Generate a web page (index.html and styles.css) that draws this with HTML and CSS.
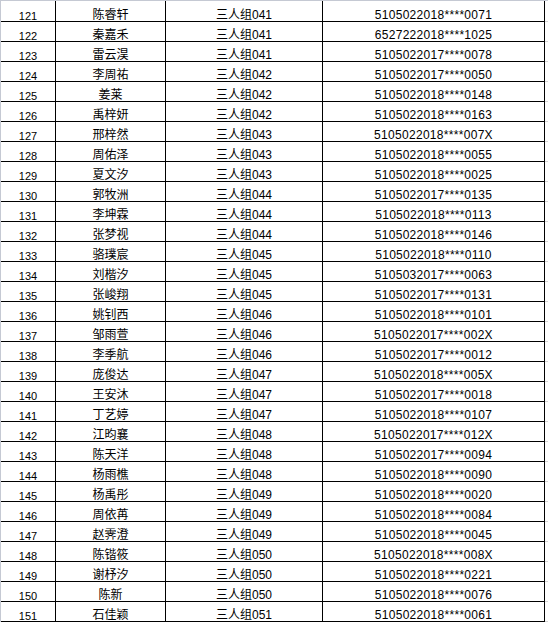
FILE: index.html
```html
<!DOCTYPE html>
<html lang="zh-CN">
<head>
<meta charset="utf-8">
<link rel="stylesheet" href="styles.css">
</head>
<body>
<div class="sheet">
<div class="row first"><div class="c no">121</div><div class="c nm">陈睿轩</div><div class="c grp">三人组041</div><div class="c id">5105022018****0071</div><div class="fill"></div></div>
<div class="row"><div class="c no">122</div><div class="c nm">秦嘉禾</div><div class="c grp">三人组041</div><div class="c id">6527222018****1025</div><div class="fill"></div></div>
<div class="row"><div class="c no">123</div><div class="c nm">雷云淏</div><div class="c grp">三人组041</div><div class="c id">5105022017****0078</div><div class="fill"></div></div>
<div class="row"><div class="c no">124</div><div class="c nm">李周祐</div><div class="c grp">三人组042</div><div class="c id">5105022017****0050</div><div class="fill"></div></div>
<div class="row"><div class="c no">125</div><div class="c nm">姜莱</div><div class="c grp">三人组042</div><div class="c id">5105022018****0148</div><div class="fill"></div></div>
<div class="row"><div class="c no">126</div><div class="c nm">禹梓妍</div><div class="c grp">三人组042</div><div class="c id">5105022018****0163</div><div class="fill"></div></div>
<div class="row"><div class="c no">127</div><div class="c nm">邢梓然</div><div class="c grp">三人组043</div><div class="c id">5105022018****007X</div><div class="fill"></div></div>
<div class="row"><div class="c no">128</div><div class="c nm">周佑泽</div><div class="c grp">三人组043</div><div class="c id">5105022018****0055</div><div class="fill"></div></div>
<div class="row"><div class="c no">129</div><div class="c nm">夏文汐</div><div class="c grp">三人组043</div><div class="c id">5105022018****0025</div><div class="fill"></div></div>
<div class="row"><div class="c no">130</div><div class="c nm">郭牧洲</div><div class="c grp">三人组044</div><div class="c id">5105022017****0135</div><div class="fill"></div></div>
<div class="row"><div class="c no">131</div><div class="c nm">李坤霖</div><div class="c grp">三人组044</div><div class="c id">5105022018****0113</div><div class="fill"></div></div>
<div class="row"><div class="c no">132</div><div class="c nm">张梦视</div><div class="c grp">三人组044</div><div class="c id">5105022018****0146</div><div class="fill"></div></div>
<div class="row"><div class="c no">133</div><div class="c nm">骆璞宸</div><div class="c grp">三人组045</div><div class="c id">5105022018****0110</div><div class="fill"></div></div>
<div class="row"><div class="c no">134</div><div class="c nm">刘楷汐</div><div class="c grp">三人组045</div><div class="c id">5105032017****0063</div><div class="fill"></div></div>
<div class="row"><div class="c no">135</div><div class="c nm">张峻翔</div><div class="c grp">三人组045</div><div class="c id">5105022017****0131</div><div class="fill"></div></div>
<div class="row"><div class="c no">136</div><div class="c nm">姚钊西</div><div class="c grp">三人组046</div><div class="c id">5105022018****0101</div><div class="fill"></div></div>
<div class="row"><div class="c no">137</div><div class="c nm">邹雨萱</div><div class="c grp">三人组046</div><div class="c id">5105022017****002X</div><div class="fill"></div></div>
<div class="row"><div class="c no">138</div><div class="c nm">李季航</div><div class="c grp">三人组046</div><div class="c id">5105022017****0012</div><div class="fill"></div></div>
<div class="row"><div class="c no">139</div><div class="c nm">庞俊达</div><div class="c grp">三人组047</div><div class="c id">5105022018****005X</div><div class="fill"></div></div>
<div class="row"><div class="c no">140</div><div class="c nm">王安沐</div><div class="c grp">三人组047</div><div class="c id">5105022017****0018</div><div class="fill"></div></div>
<div class="row"><div class="c no">141</div><div class="c nm">丁艺婷</div><div class="c grp">三人组047</div><div class="c id">5105022018****0107</div><div class="fill"></div></div>
<div class="row"><div class="c no">142</div><div class="c nm">江昀襄</div><div class="c grp">三人组048</div><div class="c id">5105022017****012X</div><div class="fill"></div></div>
<div class="row"><div class="c no">143</div><div class="c nm">陈天洋</div><div class="c grp">三人组048</div><div class="c id">5105022017****0094</div><div class="fill"></div></div>
<div class="row"><div class="c no">144</div><div class="c nm">杨雨樵</div><div class="c grp">三人组048</div><div class="c id">5105022018****0090</div><div class="fill"></div></div>
<div class="row"><div class="c no">145</div><div class="c nm">杨禹彤</div><div class="c grp">三人组049</div><div class="c id">5105022018****0020</div><div class="fill"></div></div>
<div class="row"><div class="c no">146</div><div class="c nm">周依苒</div><div class="c grp">三人组049</div><div class="c id">5105022018****0084</div><div class="fill"></div></div>
<div class="row"><div class="c no">147</div><div class="c nm">赵霁澄</div><div class="c grp">三人组049</div><div class="c id">5105022018****0045</div><div class="fill"></div></div>
<div class="row"><div class="c no">148</div><div class="c nm">陈锴筱</div><div class="c grp">三人组050</div><div class="c id">5105022018****008X</div><div class="fill"></div></div>
<div class="row"><div class="c no">149</div><div class="c nm">谢杼汐</div><div class="c grp">三人组050</div><div class="c id">5105022018****0221</div><div class="fill"></div></div>
<div class="row"><div class="c no">150</div><div class="c nm">陈新</div><div class="c grp">三人组050</div><div class="c id">5105022018****0076</div><div class="fill"></div></div>
<div class="row"><div class="c no">151</div><div class="c nm">石佳颖</div><div class="c grp">三人组051</div><div class="c id">5105022018****0061</div><div class="fill"></div></div>
</div>
</body>
</html>
```

FILE: styles.css
```css
html, body {
  margin: 0;
  padding: 0;
  background: #ffffff;
}

.sheet {
  width: 548px;
  height: 622px;
  overflow: hidden;
  box-sizing: border-box;
  border-top: 1px solid #c5c9d3;
  border-left: 1px solid #c5c9d3;
  font-family: "Liberation Sans", "Noto Sans CJK SC", sans-serif;
  color: #000000;
}

.row {
  display: grid;
  grid-template-columns: 55px 110px 157px 222px 3px;
  height: 20px;
}

.row.first {
  height: 21px;
}

.c {
  box-sizing: border-box;
  border-right: 1px solid #000000;
  border-bottom: 1px solid #000000;
  display: flex;
  align-items: flex-end;
  justify-content: center;
  font-size: 12px;
  line-height: 11px;
  white-space: nowrap;
}

.c.no {
  font-size: 11px;
  line-height: 10px;
}

.c.id {
  letter-spacing: 0.3px;
}

.fill {
  box-sizing: border-box;
  border-bottom: 1px solid #d4d4d4;
}
```
